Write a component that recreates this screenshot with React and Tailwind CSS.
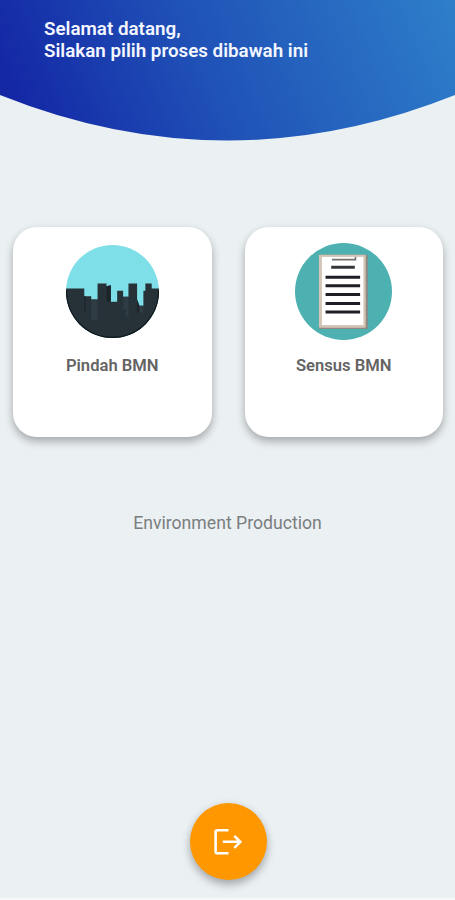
import { clsx } from "clsx";

const CityIcon = () => (
  <svg viewBox="33 29 280 280" className="mt-[18px] h-[93px] w-[93px]">
    <defs>
      <clipPath id="city">
        <circle cx="173" cy="169" r="140" />
      </clipPath>
      <clipPath id="city-low">
        <rect x="30" y="165" width="290" height="150" />
      </clipPath>
    </defs>
    <g clipPath="url(#city)">
      <rect x="30" y="26" width="290" height="290" fill="#7edfe9" />
      <path
        d="M30 160H88V183H109V193H128V145H155V153L168 150V200H187V167H205V185H221V145H247V193L254 212H266V167H272V145H291V160H316V312H30Z"
        fill="#263238"
      />
      <path d="M155 153L168 150V200H155ZM247 193L254 212V232H247ZM88 183H92V230H88Z" fill="#1b2429" />
      <path d="M109 193H128V255H109ZM205 185H221V245H213V222H205ZM254 212H266V232H254Z" fill="#303c43" />
      <circle cx="173" cy="169" r="139" fill="none" stroke="#10181c" strokeWidth="5" clipPath="url(#city-low)" />
    </g>
  </svg>
);

const DocumentIcon = () => (
  <svg viewBox="32 24 292 292" className="mt-4 h-[97px] w-[97px]">
    <circle cx="178" cy="170" r="146" fill="#4eb1b1" />
    <rect x="104" y="59" width="147" height="224" rx="4" fill="#8f8880" />
    <rect x="104" y="59" width="141" height="220" rx="3" fill="#d3c5b6" />
    <rect x="113" y="66" width="125" height="205" fill="#fff" />
    <path d="M143 74H214V66" fill="none" stroke="#77716e" strokeWidth="5" />
    <path d="M141 97H212" stroke="#35353a" strokeWidth="9" />
    <path d="M124 127H228M124 153H228M124 179H228M124 206H228M124 232H228" stroke="#1e1e26" strokeWidth="9" />
  </svg>
);

const LogoutIcon = () => (
  <svg viewBox="0 0 28 28" className="h-7 w-7" fill="none" stroke="#fff" strokeWidth="2.6">
    <path d="M14.5 2.3H3.4Q1.6 2.3 1.6 4.1V23.4Q1.6 25.2 3.4 25.2H14.5" />
    <path d="M8.8 13.8H26M20.3 7.8L26.3 13.8L20.3 19.8" />
  </svg>
);

const MenuCard = ({ icon, label, labelClass }) => (
  <button className="flex h-[210px] w-[198.5px] flex-col items-center rounded-[24px] bg-white shadow-[0_5px_8px_rgba(0,0,0,0.24),0_2px_10px_rgba(0,0,0,0.08)]">
    {icon}
    <span className={clsx("text-[16.6px] leading-5 font-semibold whitespace-nowrap text-[#646464]", labelClass)}>
      {label}
    </span>
  </button>
);

const App = () => (
  <div className="flex h-[900px] w-[455px] flex-col overflow-hidden border-b-2 border-[#f6f8f9] bg-[#ebf0f3] font-[Roboto,sans-serif]">
    <header className="h-[141px] shrink-0 bg-[linear-gradient(67deg,#1428a6_7%,#1f50b6_44%,#2e7fca_100%)] pt-[18px] pl-11 [clip-path:path('M0_0H455V95Q227.5_186_0_95Z')]">
      <p className="text-[18.8px] leading-[22px] font-semibold whitespace-nowrap text-[#f3f6ff]">
        Selamat datang,
        <br />
        Silakan pilih proses dibawah ini
      </p>
    </header>

    <main className="mt-[86px] flex justify-between pr-3 pl-[13px]">
      <MenuCard icon={<CityIcon />} label="Pindah BMN" labelClass="mt-[18px]" />
      <MenuCard icon={<DocumentIcon />} label="Sensus BMN" labelClass="mt-4" />
    </main>

    <p className="mt-[75px] text-center text-[17.65px] leading-[22px] whitespace-nowrap text-[#7b7e80]">
      Environment Production
    </p>

    <footer className="mt-auto flex justify-center pb-[18px] pl-px">
      <button className="flex h-[77px] w-[77px] items-center justify-center rounded-full bg-[#ff9800] shadow-[0_5px_8px_rgba(0,0,0,0.26),0_1px_10px_rgba(0,0,0,0.08)]">
        <LogoutIcon />
      </button>
    </footer>
  </div>
);

export default App;
